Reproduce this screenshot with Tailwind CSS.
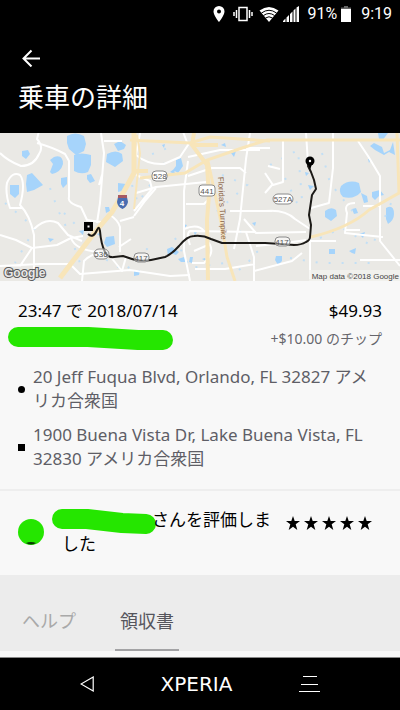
<!DOCTYPE html>
<html lang="ja">
  <head>
    <meta charset="UTF-8" />
    <meta name="viewport" content="width=device-width, initial-scale=1.0" />
    <title>乗車の詳細</title>
    <script src="https://cdn.jsdelivr.net/npm/@tailwindcss/browser@4"></script>
  </head>
  <body class="flex min-h-screen flex-col bg-[#f8f8f8] font-['Noto_Sans','Noto_Sans_CJK_JP',sans-serif] text-[17px] leading-6 text-black">
    <!-- Status bar -->
    <div class="flex h-7 items-center justify-end gap-1 bg-black px-2 font-[Roboto,sans-serif] text-base text-white">
      <svg class="mr-1 h-4 w-3" viewBox="0 0 12 16" fill="currentColor">
        <path fill-rule="evenodd" d="M6 0a5.500 5.500 0 0 0-5.500 5.500C.5 9.500 6 16 6 16s5.500-6.500 5.500-10.500A5.500 5.500 0 0 0 6 0zm0 3.500a2 2 0 1 1 0 4 2 2 0 0 1 0-4z" />
      </svg>
      <svg class="mr-[2px] h-4 w-5" viewBox="0 0 20 16" fill="none" stroke="currentColor" stroke-width="1.500">
        <path d="M6 1.500h8v13H6zM3.500 4v8M1 6v4M16.500 4v8M19 6v4" />
      </svg>
      <svg class="h-4 w-5" viewBox="0 0 20 16">
        <path d="M.5 4.500Q10-2.500 19.500 4.500L10 16z" fill="currentColor" />
        <path d="M2.500 7Q10 1.500 17.500 7M4.500 9.500Q10 5.500 15.500 9.500M6.500 12Q10 9.500 13.500 12" fill="none" stroke="#000" />
      </svg>
      <svg class="mr-1 h-4 w-4" viewBox="0 0 16 16" fill="currentColor">
        <path d="M0 16h2.500v-3.500L0 15zM3.500 16H6V9l-2.500 2.500zM7 16h2.500V5.500L7 8zM10.500 16h2V2.500l-2 2zM13.500 16H16V0l-2.500 1.500z" />
      </svg>
      <span>91%</span>
      <svg class="mr-[6px] h-4 w-[10px]" viewBox="0 0 10 16">
        <path d="M3 0h4v1.500h3V4H0V1.500h3z" fill="#666" />
        <path d="M0 3h10v13H0z" fill="currentColor" />
      </svg>
      <span>9:19</span>
    </div>

    <!-- Header -->
    <header class="bg-black px-[18px] pt-5 pb-[19px] text-white">
      <button type="button" aria-label="戻る" class="block px-1 py-px">
        <svg class="h-[18px] w-[18px]" viewBox="0 0 18 18" fill="none" stroke="currentColor" stroke-width="2">
          <path d="M18 9.500H2M9.500 1.500l-8 8 8 8" />
        </svg>
      </button>
      <h1 class="mt-[13px] text-[26px] leading-[33px]">乗車の詳細</h1>
    </header>

    <!-- Route map -->
    <svg class="block w-full" viewBox="0 0 400 148" font-family="Liberation Sans, sans-serif">
      <rect width="400" height="148" fill="#eae9e5" />
      <!-- Lakes -->
      <g fill="#a6d4fb">
        <path d="M67 3q8-5 17 0l2 8-2 7-8 4-7-6-2-6zM74 22q7-3 17 0l0 10-3 7q-7 3-14-1zM54 24q9-3 9 7-2 8-11 10l-2-2 3-8-3-4zM27 42l5-2 11 12-9 5-7 2-1-8zM10 52h9v9l-4 4-5-4zM22 18l6-1 2 4-4 5-4-3zM61 45l6-1 0 7-4 4-2-4zM87 42l4-1 4 7-5 2-3-4zM107 21q9-5 15 0l1 7-8 6-9-5zM114 11l6-3 6 4-2 4-6 2zM118 50l8 1-1 6-7 2zM106 104l8-1 1 8-8 3-3-4zM105 74h4l1 4-4 2z" />
        <path d="M341 53q8-7 18-3l2 9q-7 8-18 5-5-4-2-11zM361 60l6 3 1 6-4 1zM372 59l8-2 4 5-5 1-4 4-3-3zM386 75q8-4 8 6 0 6-6 10l-2-5zM325 78q6-5 11-1l1 6-6 5-6-4zM374 10l8 4 2 6 6-3 3-8 2 13-6-3-5 3-9-5-5-4zM378 0h10l-6 8-3-2zM329 116h6v5h-6zM349 118l7-3-1 6-3-1zM276 123h6v5l-4 4-3-5zM352 76l4-1 2 5-4 1zM359 101l6-2-2 6zM368 26l3 0-2 4z" />
        <path d="M176 27l5-2 2 8-5 7-5-3 3-4zM170 39l4-3 1 5zM167 116l5-2 7 5-3 3-5-2-3 3zM178 126l6-2 2 5-5 0zM134 138l6-1-1 5-5 1zM221 12l4-2 1 4zM193 97l4 2-2 3zM183 91l4 1-2 3zM231 20l5-2-2 6zM202 126l3-1 1 3zM190 124l3 0-1 6-3-1zM162 12l3-1-1 4zM252 90l4-1-1 4zM308 52l6 1-4 4zM305 39l4 1-3 3zM48 105l6 1-4 3zM79 98l5-1-1 5zM97 101l3-1 1 4z" />
      </g>
      <g fill="none" stroke="#c2dff5" stroke-width="2" stroke-dasharray="2 11">
        <path d="M50 55l8 22 12 25 10 28M5 70l30 25-20 35M64 80l15 15M132 52l6 18 30-45M140 26l30-12M222 42l25 10-40 35M240 98l18 22-20 18M270 32l28-15 4 50M322 20l8 30 28 35M320 105l22-10 30 18 20-45M290 125l30 5 60 0M95 120l30 18 30-30M175 105l15 30 35-5M285 45l12 25" />
      </g>
      <!-- Local roads -->
      <g fill="none" stroke="#fff" stroke-width="2" stroke-linejoin="round">
        <path d="M0 20q8 8 21 13 13 0 18-12 5-7-2-15l2-8M37 10q15 4 28 11l4 7v36q-2 6 12 10l6 13 14 2" />
        <path d="M22 75H10Q5 60 7 50q5-12 13-8 6 8 0 30 10 10 14 30l0 46M34 96q12-12 24-6l10 12 14 6M0 102l16 5 16 8 25-3 14-7 12-2M0 133l40-2 30 0 10 10 50-4 40 6 20-1M20 133l12-18" />
        <path d="M101 0l3 20-4 50-3 20M104 8h18M99 52l3-10M82 148l2-20q12-12 26-5l12 15 4-14M71 105q4 12 28 14M110 82q8 5 10 12v25M120 88l14-4M119 114l12-8" />
        <path d="M140 0l-4 22q12 10 28 9l16-7 8-12-6-16M136 60l20-6 50-5M134 78l18-22-2-8-14-6M134 83q10-15 22-28M188 28l-4 30 0 60 6 30M186 71h18l4-4M184 96q14-6 20 2M190 112q-4-12 0-14l66 1M188 24l32-7h40" />
        <path d="M188 43l24-8h28l6 5M250 0l-4 26-6 60-6 30M208 112l-14 6M246 15h24M230 78h42M246 99l8 25 0 24M244 86l12 14 50-1M195 136h30l30-5M256 113l30-3 20-3M207 108q10 10-3 22h-12M254 138l38-10 10-8" />
        <path d="M265 40l8 12 10-3V8M268 33l12 3M272 52l-7 8M265 78q20-2 30 8l15 10v50M306 0l2 30M333 0v35l-4 35-18 5M358 8l10 15 12 20v25l0 40 20 25M355 70q-12 0-8 10l-2 20 18 2 20 2M345 97l15 0M363 73h18M310 108h26M360 127h40" />
      </g>
      <!-- Highways -->
      <g fill="none" stroke="#f8e5b9">
        <path d="M134 0v40l-12 22-10 17-17 20-35 46" stroke-width="5" />
        <path d="M137 2l3 18-6 56" stroke-width="2" />
        <path d="M140 45l45-5 22-13 35-12 25-8h133" stroke-width="3" />
        <path d="M133 38h15M194 0l-2 12 15 20 2 30-2 25 1 60M192 12h26" stroke-width="4" />
        <path d="M130 7l60 3 20-6 60 4" stroke-width="3" />
        <path d="M208 28l14 66 5 30 8 24" stroke-width="3" />
        <path d="M397 0l2 60-30 17q-20 18-58 27" stroke-width="3" />
      </g>
      <!-- Route -->
      <path d="M88 101q5 5 9-4 2-5 3 1 1 13 5 21 3 6 9 5l9-1 9 3q9 3 19 1l14-3q7-3 14-11 8-10 15-10 9-1 17 3l11 4h43l16 1 13 1q7 0 12-3 4-2 4-5l1-12-2-10 3-20 4-6-2-9-3-8-3-6 1-5" fill="none" stroke="#1c1a17" stroke-width="2" stroke-linejoin="round" />
      <!-- Pick-up and drop-off -->
      <circle cx="310" cy="28" r="4.500" fill="#000" />
      <circle cx="310" cy="28" r="1.200" fill="#fff" />
      <path d="M308 31h4l-2 6z" />
      <path d="M84 89h9v9h-9z" />
      <path d="M87.500 92.500h2v2h-2z" fill="#fff" />
      <!-- Road shields -->
      <g fill="#fff" stroke="#8a8a8a" font-size="8" text-anchor="middle">
        <rect x="152" y="38" width="15" height="10" rx="4" />
        <rect x="199" y="52" width="16" height="11" rx="3" />
        <rect x="273" y="61" width="20" height="10" rx="5" />
        <g fill-opacity=".5">
          <rect x="94" y="116" width="15" height="10" rx="5" />
          <rect x="134" y="120" width="15" height="9" rx="4" />
          <rect x="275" y="104" width="15" height="9" rx="4" />
        </g>
        <g fill="#555" stroke="none">
          <text x="160" y="46">528</text>
          <text x="207" y="61">441</text>
          <text x="283" y="69">527A</text>
          <text x="101" y="124">536</text>
          <text x="141" y="128">417</text>
          <text x="282" y="112">417</text>
        </g>
      </g>
      <path d="M118 64h9l1 5q-1 5-5.500 7-5-2-5.500-7z" fill="#4a6db0" />
      <path d="M118 62h9v3h-9z" fill="#a65a63" />
      <text x="122" y="73" font-size="8" font-weight="bold" fill="#fff" text-anchor="middle">4</text>
      <text transform="translate(218 44) rotate(87)" font-size="8" fill="#8a6244">Florida's Turnpike</text>
      <text x="4" y="144" font-size="12" font-weight="bold" fill="#e8e8e8" stroke="#5c5c5c" stroke-width="2" paint-order="stroke">Google</text>
      <rect x="309" y="137" width="91" height="11" fill="#f3f3f1" fill-opacity=".7" />
      <text x="399" y="146" font-size="8" fill="#444" text-anchor="end">Map data ©2018 Google</text>
    </svg>

    <!-- Trip summary -->
    <main class="flex-1">
      <section class="border-b-2 border-[#eeeeee] px-[18px] pt-[18px] pb-[18px]">
        <div class="flex justify-between">
          <span>23:47 で 2018/07/14</span>
          <span>$49.93</span>
        </div>
        <div class="mt-1 flex items-center justify-between">
          <svg class="-ml-[10px] h-6 w-[165px]" viewBox="0 0 165 24" fill="none" stroke="#25e600" stroke-width="20" stroke-linecap="round" stroke-linejoin="round">
            <path d="M10 10h70l50 3h25" />
          </svg>
          <span class="text-sm text-[#66666c]">+$10.00 のチップ</span>
        </div>
        <ul class="mt-[14px] flex flex-col gap-[10px] text-[#5e5e66]">
          <li class="flex items-center gap-2">
            <span class="h-[7px] w-[7px] shrink-0 rounded-full bg-black"></span>
            <span>20 Jeff Fuqua Blvd, Orlando, FL 32827 アメリカ合衆国</span>
          </li>
          <li class="flex items-center gap-2">
            <span class="h-[7px] w-[7px] shrink-0 bg-black"></span>
            <span>1900 Buena Vista Dr, Lake Buena Vista, FL 32830 アメリカ合衆国</span>
          </li>
        </ul>
      </section>

      <!-- Driver rating -->
      <section class="flex items-center px-[18px] pt-[17px] pb-[19px]">
        <svg class="h-[26px] w-[26px] shrink-0" viewBox="0 0 26 26">
          <circle cx="13" cy="13" r="13" fill="#25e600" />
          <path d="M8 24q5-2 10 0-5 3-10 0z" fill="#063b00" />
        </svg>
        <p class="ml-[18px] min-w-0 flex-1">
          <svg class="-my-1 -ml-[10px] inline-block h-[25px] w-[104px] align-middle" viewBox="0 0 104 25" fill="none" stroke="#25e600" stroke-width="20" stroke-linecap="round" stroke-linejoin="round">
            <path d="M10 10h25l35 4 24 1" />
          </svg><span class="-ml-1">さんを評価しました</span>
        </p>
        <svg class="mt-2 mr-[10px] ml-3 h-[14px] w-[86px] shrink-0 self-start" viewBox="0 0 86 14" role="img" aria-label="星5つ">
          <defs>
            <path id="star" d="M7 0l1.700 5H14l-4.300 3.200L11.300 14 7 10.700 2.700 14l1.600-5.800L0 5h5.300z" />
          </defs>
          <use href="#star" />
          <use href="#star" x="18" />
          <use href="#star" x="36" />
          <use href="#star" x="54" />
          <use href="#star" x="72" />
        </svg>
      </section>
    </main>

    <!-- Tabs -->
    <div class="flex gap-[34px] bg-[#ececec] px-[17px] pt-[34px] text-lg leading-6">
      <button type="button" class="border-b-2 border-transparent px-[5px] pb-4 text-[#a9a9a9]">ヘルプ</button>
      <button type="button" class="border-b-2 border-[#a3a3a5] px-[5px] pb-4 text-[#55555c]">領収書</button>
    </div>
    <div class="h-[7px] border-b border-[#888888] bg-[#f8f8f8]"></div>

    <!-- Navigation bar -->
    <nav class="flex h-[52px] items-center justify-between bg-black px-20 text-white">
      <button type="button" aria-label="戻る">
        <svg class="h-4 w-[14px]" viewBox="0 0 14 16" fill="none" stroke="currentColor" stroke-width="1.200">
          <path d="M13.200 1v14L1 8z" />
        </svg>
      </button>
      <button type="button" class="font-['DejaVu_Sans',sans-serif] text-xl">XPERIA</button>
      <button type="button" aria-label="最近使ったアプリ">
        <svg class="h-[18px] w-[21px]" viewBox="0 0 21 18" fill="none" stroke="currentColor" stroke-width="1.200">
          <path d="M4 1.500h14M2 9.500h17M0 16.500h21" />
        </svg>
      </button>
    </nav>
  </body>
</html>
